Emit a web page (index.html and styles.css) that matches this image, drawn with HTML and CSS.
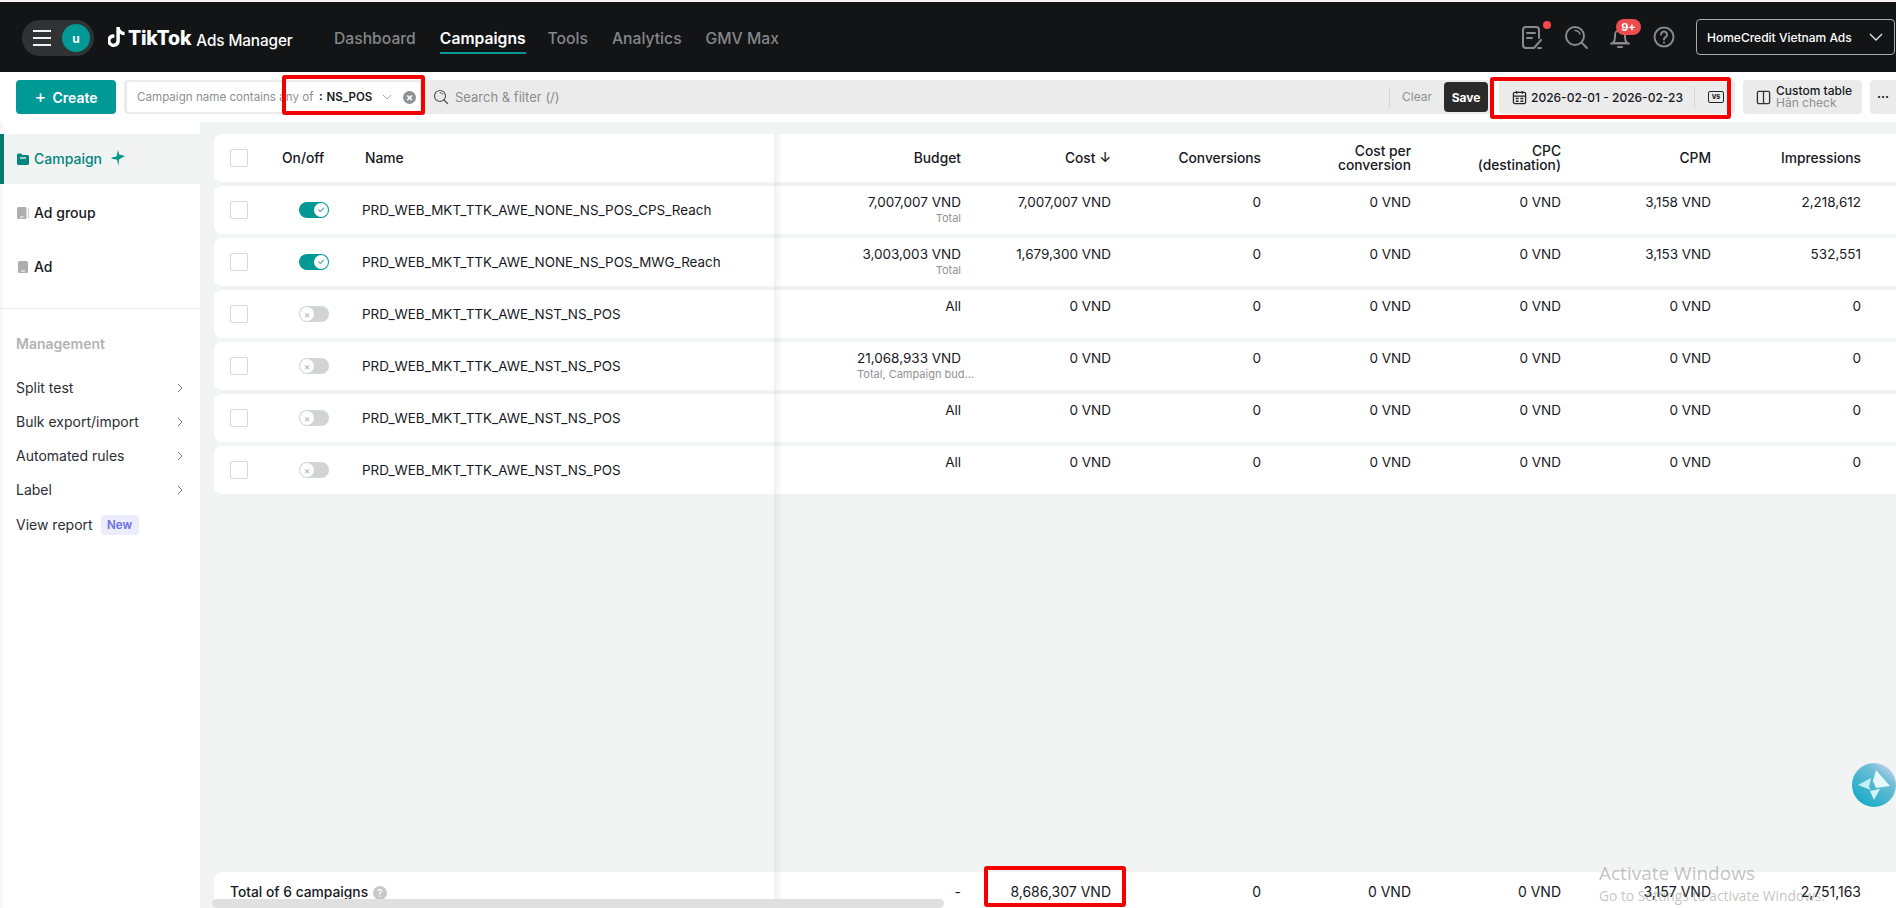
FILE: index.html
```html
<!DOCTYPE html>
<html lang="en">
<head>
<meta charset="utf-8">
<title>TikTok Ads Manager</title>
<link rel="stylesheet" href="styles.css">
</head>
<body>
<div class="page">
  <header class="topbar">
    <div class="pill">
      <span class="burger"><i></i><i></i><i></i></span>
      <span class="avatar">u</span>
    </div>
    <div class="logo">
      <svg class="note" viewBox="4 2 17 20"><path fill="#fff" d="M19.59 6.69a4.83 4.83 0 0 1-3.77-4.25V2h-3.45v13.67a2.89 2.89 0 0 1-5.2 1.74 2.89 2.89 0 0 1 2.31-4.64 2.93 2.93 0 0 1 .88.13V9.4a6.84 6.84 0 0 0-1-.05A6.33 6.33 0 0 0 5 20.1a6.34 6.34 0 0 0 10.86-4.43v-7a8.16 8.16 0 0 0 4.77 1.52v-3.4a4.85 4.85 0 0 1-1-.1z"/></svg>
      <span class="logo-tt">TikTok</span>
      <span class="logo-am">Ads Manager</span>
    </div>
    <nav class="nav">
      <a>Dashboard</a>
      <a class="active">Campaigns</a>
      <a>Tools</a>
      <a>Analytics</a>
      <a>GMV Max</a>
    </nav>
    <div class="top-right">
      <span class="ticon">
        <svg viewBox="0 0 24 24" fill="none" stroke="#8a8a8a" stroke-width="2" stroke-linecap="round" stroke-linejoin="round"><path d="M13 23H6a3 3 0 0 1-3-3V5a3 3 0 0 1 3-3h10a3 3 0 0 1 3 3v8"/><path d="M7 8h8M7 13h5"/><path d="M14 23l7-8M21 23h-3"/></svg>
        <b class="dot"></b>
      </span>
      <span class="ticon">
        <svg viewBox="0 0 24 24" fill="none" stroke="#8a8a8a" stroke-width="2" stroke-linecap="round"><circle cx="11" cy="11" r="9"/><path d="M17.5 17.5L23 23"/><path d="M11 5.5a5.5 5.5 0 0 1 5 3.5" stroke-width="1.4"/></svg>
      </span>
      <span class="ticon">
        <svg viewBox="0 0 24 24" fill="none" stroke="#8a8a8a" stroke-width="2" stroke-linecap="round" stroke-linejoin="round"><path d="M5 18c1.500-1.500 2-3 2-6V10a5 5 0 0 1 10 0v2c0 3 .5 4.500 2 6z"/><path d="M3 18.500h18M10 22h4"/></svg>
        <b class="badge">9+</b>
      </span>
      <span class="ticon">
        <svg viewBox="0 0 24 24" fill="none" stroke="#8a8a8a" stroke-width="2" stroke-linecap="round"><circle cx="12" cy="12" r="9.500"/><path d="M9 9.500a3 3 0 1 1 4.500 2.600c-1 .6-1.500 1.200-1.500 2.400"/><path d="M12 17.500v.2"/></svg>
      </span>
      <div class="account">
        <span>HomeCredit Vietnam Ads</span>
        <svg viewBox="0 0 14 8" fill="none" stroke="#e8e8e8" stroke-width="1.300"><path d="M1 1l6 6 6-6"/></svg>
      </div>
    </div>
  </header>

  <div class="toolbar">
    <button class="create"><span class="plus">+</span> Create</button>
    <div class="filter">
      <div class="chip">
        <span class="chip-label">Campaign name contains any of</span>
        <span class="chip-value">: NS_POS</span>
        <svg class="chip-arrow" viewBox="0 0 10 6" fill="none" stroke="#a8a8a8" stroke-width="1"><path d="M1 1l4 4 4-4"/></svg>
        <span class="chip-x">×</span>
      </div>
      <svg class="search-ic" viewBox="0 0 16 16" fill="none" stroke="#555" stroke-width="1.200" stroke-linecap="round"><circle cx="7" cy="7" r="5.500"/><path d="M11 11l3.500 3.500"/><path d="M7 3.500a3.500 3.500 0 0 1 3 2" stroke-width="1"/></svg>
      <span class="search-text">Search &amp; filter (/)</span>
      <span class="clear">Clear</span>
      <button class="save">Save</button>
    </div>
    <div class="date">
      <svg class="cal" viewBox="0 0 16 16" fill="none" stroke="#222" stroke-width="1.300"><rect x="1.500" y="2.500" width="13" height="12" rx="1.500"/><path d="M1.500 6.500h13M5 1v3M11 1v3"/><path d="M4 9h3M9 9h3M4 12h3M9 12h3" stroke-width="1.500"/></svg>
      <span class="date-text">2026-02-01 - 2026-02-23</span>
      <span class="date-sep"></span>
      <span class="vs">VS</span>
    </div>
    <div class="custom">
      <svg viewBox="0 0 16 16" fill="none" stroke="#333" stroke-width="1.400"><rect x="1.500" y="1.500" width="13" height="13" rx="1.500"/><path d="M8 1.500v13"/></svg>
      <div class="custom-text"><span>Custom table</span><span class="sub">Hân check</span></div>
    </div>
    <div class="more">···</div>
  </div>

  <div class="main">
    <aside class="sidebar">
      <a class="level active">
        <svg viewBox="0 0 12 12"><path fill="#00857f" d="M0 2a1.500 1.500 0 0 1 1.500-1.500h2.500L5.500 2h5A1.500 1.500 0 0 1 12 3.500v7A1.500 1.500 0 0 1 10.500 12h-9A1.500 1.500 0 0 1 0 10.500z"/><path stroke="#fff" stroke-width="1.200" d="M3 5h6"/></svg>
        <span>Campaign</span>
        <svg class="spark" viewBox="0 0 14 16"><path fill="#00968f" d="M7 0l1.200 4.500L14 6 9.500 8.500 8 9.500 7.500 16 6 9.800 0 8.500 1 7.500 5.500 6.500z"/></svg>
      </a>
      <a class="level">
        <svg viewBox="0 0 12 12"><rect width="9.500" height="12" rx="1.500" fill="#aeaeae"/><rect x="11" y="1" width="1" height="10" fill="#cfcfcf"/><rect x="3" y="9.500" width="3.500" height="1" fill="#fff"/></svg>
        <span>Ad group</span>
      </a>
      <a class="level">
        <svg viewBox="0 0 12 12"><rect x="1" width="10" height="12" rx="1.500" fill="#aeaeae"/><rect x="4" y="9.500" width="4" height="1" fill="#fff"/></svg>
        <span>Ad</span>
      </a>
      <hr class="side-sep">
      <div class="side-title">Management</div>
      <ul class="side-list">
        <li>Split test<svg viewBox="0 0 6 10" fill="none" stroke="#777" stroke-width="1"><path d="M1 1l4 4-4 4"/></svg></li>
        <li>Bulk export/import<svg viewBox="0 0 6 10" fill="none" stroke="#777" stroke-width="1"><path d="M1 1l4 4-4 4"/></svg></li>
        <li>Automated rules<svg viewBox="0 0 6 10" fill="none" stroke="#777" stroke-width="1"><path d="M1 1l4 4-4 4"/></svg></li>
        <li>Label<svg viewBox="0 0 6 10" fill="none" stroke="#777" stroke-width="1"><path d="M1 1l4 4-4 4"/></svg></li>
        <li class="report">View report <span class="new">New</span></li>
      </ul>
    </aside>

    <section class="content">
      <div class="rows">
        <div class="row head">
          <div class="c-check"><span class="box"></span></div>
          <div class="c-on">On/off</div>
          <div class="c-name">Name</div>
          <div class="num">Budget</div>
          <div class="num">Cost ↓</div>
          <div class="num">Conversions</div>
          <div class="num">Cost per<br>conversion</div>
          <div class="num">CPC<br>(destination)</div>
          <div class="num">CPM</div>
          <div class="num">Impressions</div>
        </div>

        <div class="row">
          <div class="c-check"><span class="box"></span></div>
          <div class="c-tog"><span class="tog on"><i>✓</i></span></div>
          <div class="c-title">PRD_WEB_MKT_TTK_AWE_NONE_NS_POS_CPS_Reach</div>
          <div class="val">7,007,007 VND<small>Total</small></div>
          <div class="val">7,007,007 VND</div><div class="val">0</div><div class="val">0 VND</div><div class="val">0 VND</div><div class="val">3,158 VND</div><div class="val">2,218,612</div>
        </div>
        <div class="row">
          <div class="c-check"><span class="box"></span></div>
          <div class="c-tog"><span class="tog on"><i>✓</i></span></div>
          <div class="c-title">PRD_WEB_MKT_TTK_AWE_NONE_NS_POS_MWG_Reach</div>
          <div class="val">3,003,003 VND<small>Total</small></div>
          <div class="val">1,679,300 VND</div><div class="val">0</div><div class="val">0 VND</div><div class="val">0 VND</div><div class="val">3,153 VND</div><div class="val">532,551</div>
        </div>
        <div class="row">
          <div class="c-check"><span class="box"></span></div>
          <div class="c-tog"><span class="tog"><i>×</i></span></div>
          <div class="c-title">PRD_WEB_MKT_TTK_AWE_NST_NS_POS</div>
          <div class="val">All</div>
          <div class="val">0 VND</div><div class="val">0</div><div class="val">0 VND</div><div class="val">0 VND</div><div class="val">0 VND</div><div class="val">0</div>
        </div>
        <div class="row">
          <div class="c-check"><span class="box"></span></div>
          <div class="c-tog"><span class="tog"><i>×</i></span></div>
          <div class="c-title">PRD_WEB_MKT_TTK_AWE_NST_NS_POS</div>
          <div class="val">21,068,933 VND<small class="wide">Total, Campaign bud...</small></div>
          <div class="val">0 VND</div><div class="val">0</div><div class="val">0 VND</div><div class="val">0 VND</div><div class="val">0 VND</div><div class="val">0</div>
        </div>
        <div class="row">
          <div class="c-check"><span class="box"></span></div>
          <div class="c-tog"><span class="tog"><i>×</i></span></div>
          <div class="c-title">PRD_WEB_MKT_TTK_AWE_NST_NS_POS</div>
          <div class="val">All</div>
          <div class="val">0 VND</div><div class="val">0</div><div class="val">0 VND</div><div class="val">0 VND</div><div class="val">0 VND</div><div class="val">0</div>
        </div>
        <div class="row">
          <div class="c-check"><span class="box"></span></div>
          <div class="c-tog"><span class="tog"><i>×</i></span></div>
          <div class="c-title">PRD_WEB_MKT_TTK_AWE_NST_NS_POS</div>
          <div class="val">All</div>
          <div class="val">0 VND</div><div class="val">0</div><div class="val">0 VND</div><div class="val">0 VND</div><div class="val">0 VND</div><div class="val">0</div>
        </div>
      </div>

      <div class="row total">
        <div class="c-total">Total of 6 campaigns <span class="q">?</span></div>
        <div class="val">-</div>
        <div class="val">8,686,307 VND</div><div class="val">0</div><div class="val">0 VND</div><div class="val">0 VND</div><div class="val">3,157 VND</div><div class="val">2,751,163</div>
      </div>

      <div class="col-shadow"></div>
      <div class="scrollbar"></div>
      <div class="assist">
        <svg viewBox="0 0 44 44"><defs><linearGradient id="ag" x1="0.900" y1="0" x2="0.100" y2="1"><stop offset="0" stop-color="#d9d6f6"/><stop offset="0.300" stop-color="#6fbdd6"/><stop offset="1" stop-color="#0aa9c4"/></linearGradient></defs><circle cx="22" cy="22" r="22" fill="url(#ag)"/><path fill="#e6f8fb" d="M24 7l14 16-14 2-3-7z"/><path fill="#c8eff5" d="M6 22l13-7-2 9 2 3z"/><path fill="#d4f3f8" d="M18 28l9-2 1 0-6 11z"/></svg>
      </div>
    </section>
  </div>

  <div class="mark mark-filter"></div>
  <div class="mark mark-date"></div>
  <div class="mark mark-cost"></div>

  <div class="activate">
    <div class="a1">Activate Windows</div>
    <div class="a2">Go to Settings to activate Windows.</div>
  </div>
</div>
</body>
</html>
```

FILE: styles.css
```css
* { box-sizing: border-box; }
html, body { margin: 0; padding: 0; height: 100%; overflow: hidden; }
body { font-family: Inter, "Noto Sans", "Liberation Sans", sans-serif; color: #161823; font-size: 13.500px; background: #f2f4f4; }
a { text-decoration: none; color: inherit; }
button { font-family: inherit; border: 0; }

.page { position: relative; display: flex; flex-direction: column; height: 908px; width: 1896px; overflow: hidden; border-top: 2px solid #f7f2ef; background: #f2f4f4; }

/* top bar */
.topbar { height: 70px; background: #131416; display: flex; align-items: center; padding-left: 22px; flex: none; }
.pill { width: 72px; height: 36px; border-radius: 18px; background: #303233; display: flex; align-items: center; padding-left: 11px; gap: 11px; margin-top: 2px; }
.burger { display: flex; flex-direction: column; gap: 5px; width: 18px; }
.burger i { display: block; height: 2px; background: #f2f2f2; }
.avatar { width: 28px; height: 28px; border-radius: 50%; background: #009995; color: #fff; font-size: 12px; font-weight: 700; display: flex; align-items: center; justify-content: center; }
.logo { display: flex; align-items: center; margin-left: 14px; color: #fff; width: 226px; margin-top: 2px; }
.note { width: 17px; height: 20px; margin-top: -2px; }
.logo-tt { font-size: 19.500px; font-weight: 800; margin-left: 3px; letter-spacing: -0.200px; }
.logo-am { font-size: 15.300px; font-weight: 500; margin-left: 5px; margin-top: 5px; letter-spacing: -0.100px; }
.nav { display: flex; gap: 24px; font-size: 15.700px; font-weight: 500; color: #84878a; height: 34px; line-height: 24px; margin-top: 14px; }
.nav a { height: 27px; white-space: nowrap; }
.nav a.active { color: #fff; font-weight: 600; border-bottom: 2px solid #009995; margin-right: -2px; }
.top-right { margin-left: auto; display: flex; align-items: center; gap: 20px; margin-right: 1px; }
.ticon { position: relative; width: 24px; height: 24px; display: block; }
.ticon svg { display: block; width: 24px; height: 24px; }
.dot { position: absolute; left: 23px; top: -4px; width: 8px; height: 8px; border-radius: 50%; background: #f4484c; }
.badge { position: absolute; left: 8px; top: -6px; width: 25px; height: 16px; border-radius: 8px; background: #ef4c50; color: #fff; font-size: 11px; font-weight: 700; line-height: 16px; text-align: center; }
.account { width: 199px; height: 36px; border: 1px solid #a9abad; border-radius: 4px; color: #fff; font-size: 12px; font-weight: 500; display: flex; align-items: center; padding-left: 10px; }
.account svg { width: 14px; height: 8px; margin-left: auto; margin-right: 11px; }

/* toolbar */
.toolbar { flex: none; height: 50px; background: #fff; display: flex; align-items: flex-start; padding: 8px 0 0 16px; }
.create { width: 100px; height: 34px; border-radius: 4px; background: #009995; color: #fff; font-size: 14px; font-weight: 600; display: flex; align-items: center; justify-content: center; gap: 6px; }
.plus { font-size: 18px; font-weight: 400; line-height: 18px; }
.filter { flex: 1; margin-left: 8px; height: 34px; background: #ebebeb; border-radius: 4px 0 0 4px; display: flex; align-items: center; padding-left: 3px; padding-right: 2px; }
.chip { width: 293px; height: 30px; background: #fff; border-radius: 3px; display: flex; align-items: center; padding-left: 10px; font-size: 11.600px; white-space: nowrap; }
.chip-label { color: #8e9093; width: 182px; flex: none; }
.chip-value { color: #161823; font-weight: 600; font-size: 11.500px; width: 63px; flex: none; word-spacing: 1px; }
.chip-arrow { width: 10px; height: 6px; flex: none; }
.chip-x { width: 13px; height: 13px; border-radius: 50%; background: #8f9295; color: #fff; font-size: 11px; line-height: 13px; text-align: center; margin-left: 11px; font-weight: 700; flex: none; }
.search-ic { width: 16px; height: 16px; margin-left: 13px; }
.search-text { margin-left: 6px; color: #8a8c8f; font-size: 13px; }
.clear { margin-left: auto; padding-left: 12px; border-left: 1px solid #d4d4d4; height: 20px; line-height: 20px; color: #8e9093; font-size: 12px; }
.save { margin-left: 12px; width: 44px; height: 30px; border-radius: 4px; background: #2a2a2a; color: #fff; font-size: 12px; font-weight: 700; padding: 0; }
.date { margin-left: 9px; width: 236px; height: 34px; background: #ebebeb; border-radius: 4px; display: flex; align-items: center; padding-left: 13px; font-weight: 500; font-size: 12px; }
.cal { width: 15px; height: 15px; flex: none; }
.date-text { margin-left: 4px; white-space: nowrap; width: 153px; flex: none; }
.date-sep { width: 1px; height: 20px; background: #d4d4d4; margin-left: 10px; flex: none; }
.vs { margin-left: 13px; width: 16px; height: 12px; border: 1.500px solid #222; border-radius: 2px; font-size: 6px; font-weight: 800; line-height: 9px; text-align: center; flex: none; }
.custom { margin-left: 8px; width: 119px; height: 34px; background: #ebebeb; border-radius: 4px; display: flex; align-items: center; padding-left: 13px; gap: 5px; }
.custom svg { width: 15px; height: 15px; }
.custom-text { display: flex; flex-direction: column; font-size: 12px; font-weight: 500; line-height: 12px; white-space: nowrap; }
.custom-text .sub { color: #8e9093; font-weight: 400; }
.more { margin-left: 8px; width: 26px; height: 34px; background: #ebebeb; border-radius: 4px 0 0 4px; text-align: center; line-height: 34px; font-weight: 700; font-size: 12px; }

/* main */
.main { flex: 1; display: flex; min-height: 0; }
.sidebar { width: 200px; flex: none; background: linear-gradient(90deg, #f5f5f5 0, #fff 5px); padding-top: 12px; display: flex; flex-direction: column; }
.level { height: 50px; margin-bottom: 4px; display: flex; align-items: center; padding-left: 17px; font-weight: 500; font-size: 14px; gap: 5px; }
.level span { margin-top: -1px; }
.level svg { width: 12px; height: 12px; flex: none; }
.level.active { background: #f2f4f4; border-left: 4px solid #00796f; padding-left: 13px; color: #00857f; }
.level .spark { width: 14px; height: 16px; margin-left: 4px; margin-top: -3px; }
.side-sep { border: 0; border-top: 1px solid #e9e9e9; margin: 12px 0 0 0; }
.side-title { color: #b3b3b3; font-weight: 600; padding-left: 16px; margin-top: 26px; line-height: 18px; font-size: 14px; }
.side-list { list-style: none; margin: 18px 0 0 0; padding: 0 16px; font-size: 14px; }
.side-list li { height: 34px; line-height: 34px; display: flex; align-items: center; justify-content: space-between; color: #2c2e34; }
.side-list svg { width: 6px; height: 10px; margin-right: 1px; }
.side-list .report { justify-content: flex-start; gap: 8px; margin-top: 1px; }
.new { background: #ebecfd; color: #6a6fe0; font-size: 11.500px; font-weight: 600; border-radius: 4px; width: 38px; height: 20px; line-height: 20px; text-align: center; }

.content { position: relative; flex: 1; min-width: 0; padding: 12px 0 0 14px; display: flex; flex-direction: column; overflow: hidden; }
.rows { flex: 1; display: flex; flex-direction: column; gap: 4px; }
.row { display: grid; grid-template-columns: 58px 90px 412px 203px repeat(6, 150px); width: 1682px; height: 48px; background: #fff; border-radius: 8px 0 0 8px; }
.row > div { min-width: 0; }
.c-check { padding: 15px 0 0 16px; }
.box { display: block; width: 18px; height: 18px; background: #fff; border: 1px solid #d8d8d8; border-radius: 2px; }
.c-tog { padding: 16px 0 0 27px; }
.tog { display: block; position: relative; width: 30px; height: 16px; border-radius: 8px; background: #d2d3d4; }
.tog i { position: absolute; left: 1px; top: 1px; width: 14px; height: 14px; border-radius: 50%; background: #fff; color: #b0b0b0; font-size: 10px; font-style: normal; text-align: center; line-height: 14px; }
.tog.on { background: #009995; }
.tog.on i { left: 15px; color: #00857f; font-size: 9px; }
.c-title { line-height: 48px; padding-left: 0; white-space: nowrap; font-size: 13.450px; }
.val { padding: 7px 16px 0 0; line-height: 18px; text-align: right; white-space: nowrap; }
.val small { display: block; font-size: 11px; line-height: 14px; color: #909296; }
.val small.wide { margin-right: -13px; }
.head { font-weight: 500; font-size: 13.800px; }
.head > div { display: flex; align-items: center; }
.head .c-check { padding: 0 0 0 16px; }
.c-on { padding-left: 10px; }
.c-name { padding-left: 3px; }
.num { justify-content: flex-end; text-align: right; padding-right: 16px; line-height: 14px; }
.total { flex: none; height: 36px; margin-top: auto; border-radius: 8px 0 0 0; grid-template-columns: 560px 203px repeat(6, 150px); font-size: 14px; }
.total .val { padding-top: 11px; }
.c-total { padding: 11px 0 0 16px; line-height: 18px; font-weight: 500; font-size: 13.800px; }
.q { display: inline-block; width: 14px; height: 14px; border-radius: 50%; background: #c8c8c8; color: #fff; font-size: 10px; text-align: center; line-height: 14px; vertical-align: 0; margin-left: 1px; }

.col-shadow { position: absolute; left: 574px; top: 12px; bottom: 0; width: 9px; background: linear-gradient(90deg, rgba(0,0,0,.055), rgba(0,0,0,0)); pointer-events: none; }
.scrollbar { position: absolute; left: 12px; bottom: 0; width: 732px; height: 9px; background: #e0e0e0; border-radius: 5px; }
.assist { position: absolute; right: 0; bottom: 101px; width: 44px; height: 44px; }
.assist svg { display: block; width: 44px; height: 44px; }

/* review marks */
.mark { position: absolute; border: 4px solid #f50000; border-radius: 3px; pointer-events: none; }
.mark-filter { left: 282px; top: 73px; width: 143px; height: 40px; }
.mark-date { left: 1490px; top: 75px; width: 241px; height: 42px; }
.mark-cost { left: 984px; top: 864px; width: 142px; height: 41px; }

.activate { position: absolute; left: 1599px; top: 858px; font-family: "Open Sans", "Noto Sans", sans-serif; color: rgba(110,110,110,.42); white-space: nowrap; pointer-events: none; }
.a1 { font-size: 19px; line-height: 26px; }
.a2 { font-size: 13.800px; line-height: 20px; }
```
